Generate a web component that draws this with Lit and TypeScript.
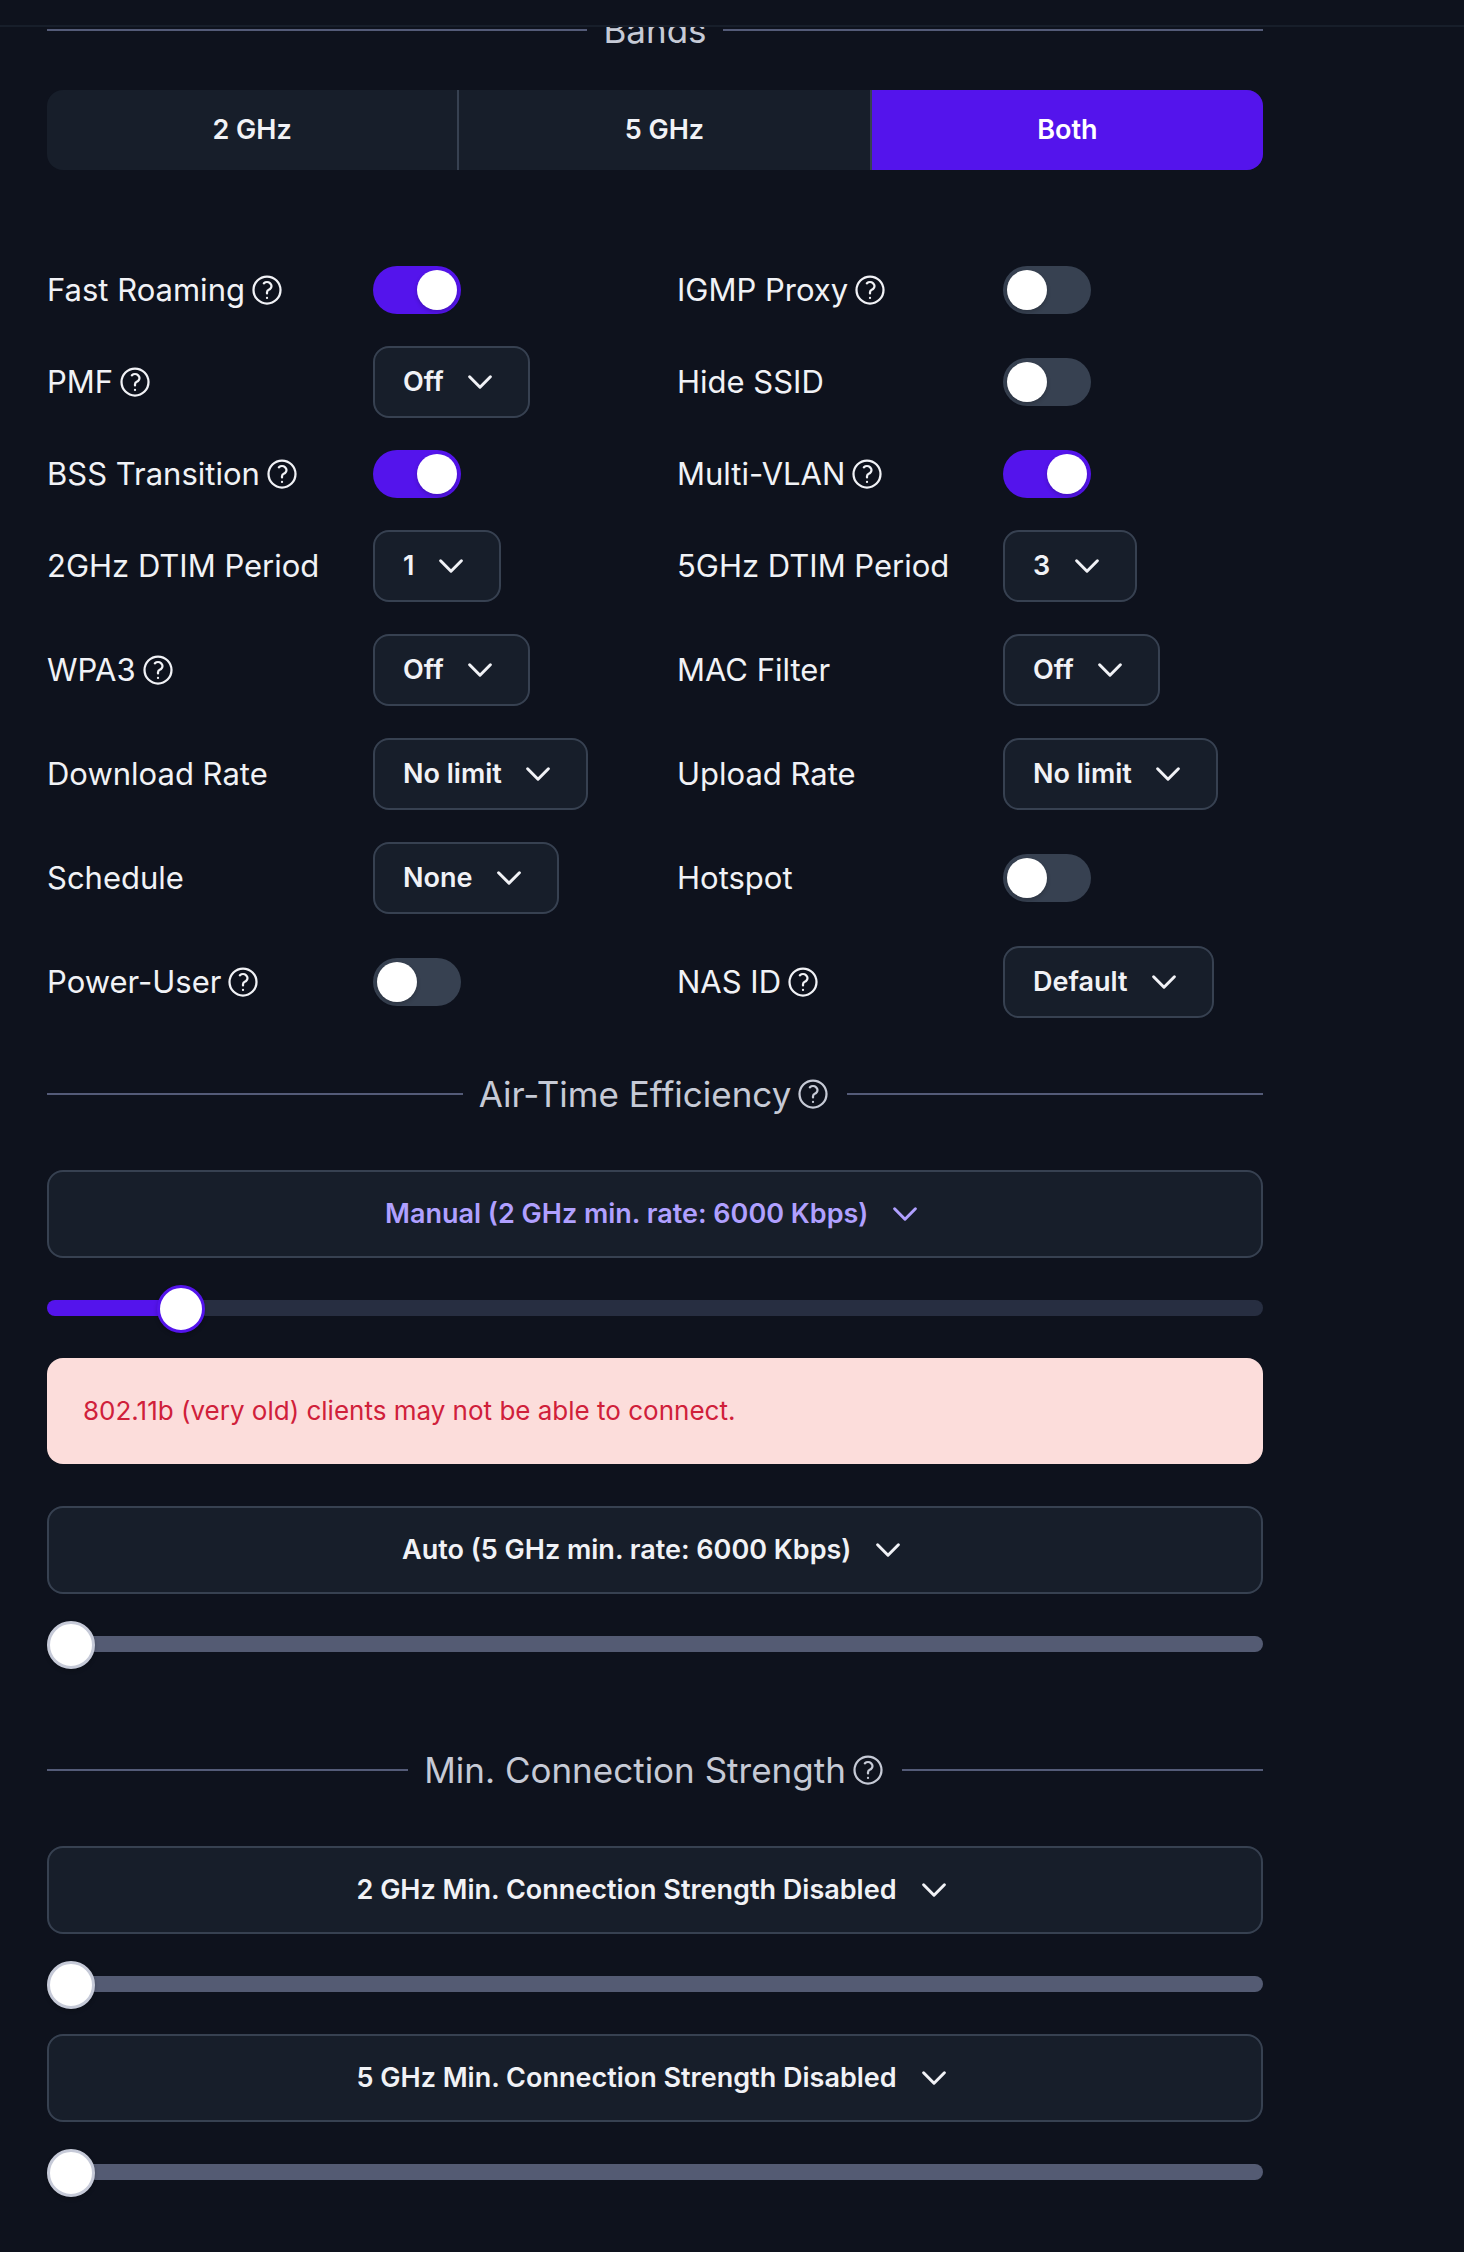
import { LitElement, html, css, nothing } from "lit";
import { customElement, state } from "lit/decorators.js";
import { classMap } from "lit/directives/class-map.js";
import { styleMap } from "lit/directives/style-map.js";

interface Setting {
  id: string;
  label: string;
  help?: boolean;
  on?: boolean;
  value?: string;
}

const SETTINGS: Setting[] = [
  { id: "fast-roaming", label: "Fast Roaming", help: true, on: true },
  { id: "igmp-proxy", label: "IGMP Proxy", help: true, on: false },
  { id: "pmf", label: "PMF", help: true, value: "Off" },
  { id: "hide-ssid", label: "Hide SSID", on: false },
  { id: "bss-transition", label: "BSS Transition", help: true, on: true },
  { id: "multi-vlan", label: "Multi-VLAN", help: true, on: true },
  { id: "dtim-2", label: "2GHz DTIM Period", value: "1" },
  { id: "dtim-5", label: "5GHz DTIM Period", value: "3" },
  { id: "wpa3", label: "WPA3", help: true, value: "Off" },
  { id: "mac-filter", label: "MAC Filter", value: "Off" },
  { id: "download-rate", label: "Download Rate", value: "No limit" },
  { id: "upload-rate", label: "Upload Rate", value: "No limit" },
  { id: "schedule", label: "Schedule", value: "None" },
  { id: "hotspot", label: "Hotspot", on: false },
  { id: "power-user", label: "Power-User", help: true, on: false },
  { id: "nas-id", label: "NAS ID", help: true, value: "Default" },
];

@customElement("app-root")
export class AppRoot extends LitElement {
  @state() private band = "Both";
  @state() private rate = 6000;

  static styles = css`
    :host {
      display: block;
      min-height: 100vh;
      background: #0e121d;
      color: #f1f2f6;
      font-family: Inter, "Liberation Sans", sans-serif;
      font-size: 31px;
      line-height: 40px;
    }
    * {
      box-sizing: border-box;
    }
    button,
    select,
    input {
      margin: 0;
      padding: 0;
      border: 0;
      background: none;
      color: inherit;
      font: inherit;
    }
    .topbar {
      position: sticky;
      top: 0;
      z-index: 1;
      height: 27px;
      background: #0e121d;
      border-bottom: 2px solid #171e2a;
    }
    .content {
      margin-top: -21px;
      padding: 0 201px 48px 47px;
    }
    .divider {
      display: flex;
      align-items: center;
      gap: 16px;
      color: #c6cad6;
    }
    .divider::before,
    .divider::after {
      content: "";
      flex: 1;
      height: 2px;
      background: #545b78;
    }
    .title {
      display: flex;
      align-items: center;
      gap: 4px;
    }
    .title h2 {
      margin: 0;
      font-size: 35px;
      font-weight: 400;
      line-height: 48px;
    }
    .help {
      display: block;
      width: 36px;
      height: 36px;
      border-radius: 50%;
      cursor: pointer;
    }
    .help svg {
      display: block;
    }
    .bands {
      display: flex;
      margin-top: 36px;
      border-radius: 16px;
      overflow: hidden;
      background: #171e2a;
    }
    .band {
      flex: 1 1 auto;
      padding: 20px 32px;
      border-right: 2px solid #374151;
      font-size: 27px;
      font-weight: 600;
      cursor: pointer;
    }
    .band:last-child {
      border-right: 0;
    }
    .band.active {
      background: #5414ec;
      color: #fff;
    }
    .settings {
      display: grid;
      grid-template-columns: 1fr 1fr;
      align-items: center;
      gap: 32px 44px;
      margin: 96px 0 52px;
    }
    .setting {
      display: grid;
      grid-template-columns: 326px 1fr;
      align-items: center;
      justify-items: start;
    }
    .name {
      display: flex;
      align-items: center;
      gap: 4px;
      white-space: nowrap;
    }
    .toggle {
      appearance: none;
      display: block;
      width: 88px;
      height: 48px;
      padding: 4px;
      border-radius: 24px;
      background: #374151;
      cursor: pointer;
    }
    .toggle::before {
      content: "";
      display: block;
      width: 40px;
      height: 40px;
      border-radius: 50%;
      background: #fff;
      box-shadow: 0 2px 4px rgba(0, 0, 0, 0.2);
    }
    .toggle:checked {
      background: #5414ec;
    }
    .toggle:checked::before {
      margin-left: 40px;
    }
    .picker {
      display: flex;
      justify-content: center;
      padding: 14px 28px;
      border: 2px solid #374151;
      border-radius: 16px;
      background: #171e2a;
      font-size: 27px;
      font-weight: 600;
    }
    .picker.wide {
      padding: 22px 28px;
    }
    .picker.accent {
      color: #b0a0ff;
    }
    .field {
      display: grid;
      align-items: center;
    }
    .field select,
    .field svg {
      grid-area: 1 / 1;
    }
    .field select {
      appearance: none;
      outline: none;
      height: 40px;
      padding-right: 56px;
      cursor: pointer;
    }
    .field svg {
      justify-self: end;
      pointer-events: none;
    }
    .stack {
      display: flex;
      flex-direction: column;
      gap: 26px;
      margin-top: 52px;
    }
    .spaced {
      margin-top: 78px;
    }
    .slider {
      --track: #545b73;
      --edge: #c6cad8;
      appearance: none;
      display: block;
      width: 100%;
      height: 48px;
      outline: none;
    }
    .slider.live {
      --track: linear-gradient(
        to right,
        #5414ec calc(24px + (100% - 48px) * var(--level)),
        #272e41 calc(24px + (100% - 48px) * var(--level))
      );
      --edge: #5414ec;
    }
    .slider::-webkit-slider-runnable-track {
      height: 16px;
      border-radius: 8px;
      background: var(--track);
    }
    .slider::-webkit-slider-thumb {
      appearance: none;
      width: 48px;
      height: 48px;
      margin-top: -15px;
      border: 3px solid var(--edge);
      border-radius: 50%;
      background: #fff;
      box-shadow: 0 2px 4px rgba(0, 0, 0, 0.2);
    }
    .alert {
      margin: 0 0 16px;
      padding: 33px 36px;
      border-radius: 16px;
      background: #fcdddb;
      color: #d0203a;
      font-size: 26px;
      font-weight: 400;
    }
  `;

  private help(labelId: string) {
    return html`<button class="help" type="button" aria-labelledby=${labelId}>
      <svg width="36" height="36" viewBox="0 0 24 24" fill="none" stroke="currentColor" stroke-width="1.5" stroke-linecap="round" stroke-linejoin="round">
        <circle cx="12" cy="12" r="9" />
        <path d="M9.879 7.519c1.171-1.025 3.071-1.025 4.242 0 1.172 1.025 1.172 2.687 0 3.712-.203.179-.43.326-.67.442-.745.361-1.45.999-1.45 1.827v.75M12 17.25h.008v.008H12v-.008z" />
      </svg>
    </button>`;
  }

  private divider(id: string, title: string, help = false) {
    return html`<div class="divider">
      <div class="title">
        <h2 id=${id}>${title}</h2>
        ${help ? this.help(id) : nothing}
      </div>
    </div>`;
  }

  private picker(id: string, value: string, labelledBy?: string, accent = false) {
    return html`<div class=${classMap({ picker: true, wide: !!labelledBy, accent })}>
      <div class="field">
        <select id=${id} aria-labelledby=${labelledBy ?? `${id}-label`}>
          <option>${value}</option>
        </select>
        <svg width="40" height="40" viewBox="0 0 40 40" fill="none" stroke="currentColor" stroke-width="3" stroke-linecap="round" stroke-linejoin="round" aria-hidden="true">
          <path d="M9.6 14.8 20 25.2 30.4 14.8" />
        </svg>
      </div>
    </div>`;
  }

  private idleSlider(labelledBy: string) {
    return html`<input class="slider" type="range" min="0" max="100" .value=${"0"} aria-labelledby=${labelledBy} disabled />`;
  }

  private setting(s: Setting) {
    return html`<div class="setting">
      <div class="name">
        <label id="${s.id}-label" for=${s.id}>${s.label}</label>
        ${s.help ? this.help(`${s.id}-label`) : nothing}
      </div>
      ${s.value === undefined
        ? html`<input class="toggle" type="checkbox" role="switch" id=${s.id} .checked=${!!s.on} />`
        : this.picker(s.id, s.value)}
    </div>`;
  }

  render() {
    const level = (this.rate - 1000) / 53000;
    return html`
      <header class="topbar"></header>
      <main class="content">
        ${this.divider("bands", "Bands")}
        <div class="bands" role="group" aria-labelledby="bands">
          ${["2 GHz", "5 GHz", "Both"].map(
            (b) => html`<button
              type="button"
              class=${classMap({ band: true, active: b === this.band })}
              aria-pressed=${b === this.band}
              @click=${() => (this.band = b)}
            >${b}</button>`
          )}
        </div>

        <div class="settings">${SETTINGS.map((s) => this.setting(s))}</div>

        ${this.divider("air-time", "Air-Time Efficiency", true)}
        <div class="stack">
          ${this.picker("rate-2", `Manual (2 GHz min. rate: ${this.rate} Kbps)`, "air-time", true)}
          <input
            class="slider live"
            type="range"
            min="1000"
            max="54000"
            step="500"
            .value=${String(this.rate)}
            aria-labelledby="rate-2"
            style=${styleMap({ "--level": String(level) })}
            @input=${(e: Event) => (this.rate = Number((e.target as HTMLInputElement).value))}
          />
          <p class="alert" role="alert">802.11b (very old) clients may not be able to connect.</p>
          ${this.picker("rate-5", "Auto (5 GHz min. rate: 6000 Kbps)", "air-time")}
          ${this.idleSlider("rate-5")}
        </div>

        <div class="spaced">${this.divider("strength", "Min. Connection Strength", true)}</div>
        <div class="stack">
          ${this.picker("strength-2", "2 GHz Min. Connection Strength Disabled", "strength")}
          ${this.idleSlider("strength-2")}
          ${this.picker("strength-5", "5 GHz Min. Connection Strength Disabled", "strength")}
          ${this.idleSlider("strength-5")}
        </div>
      </main>
    `;
  }
}
